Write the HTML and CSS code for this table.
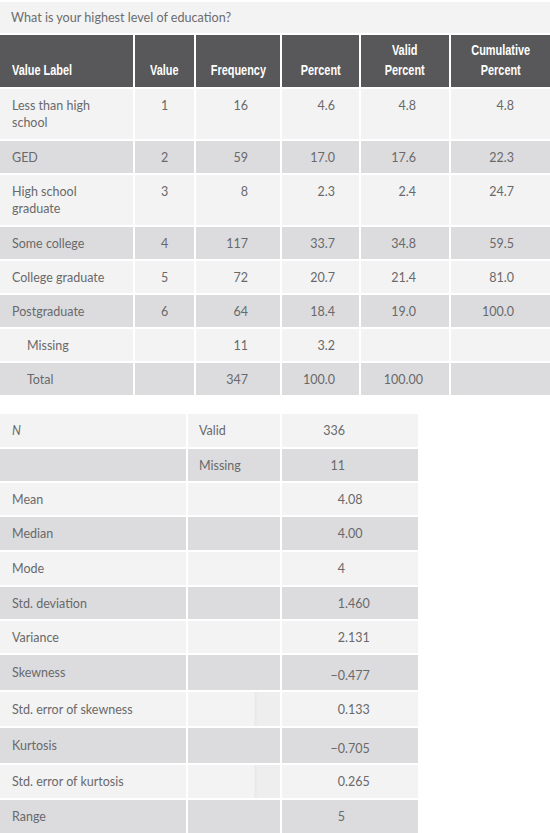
FILE: index.html
```html
<!DOCTYPE html>
<html lang="en">
<head>
<meta charset="utf-8">
<title>Education frequencies</title>
<link rel="stylesheet" href="styles.css">
</head>
<body>
<div class="freq">
  <div class="caption">What is your highest level of education?</div>
  <div class="grid">
    <div class="hd left"><span class="t">Value Label</span></div>
    <div class="hd"><span class="t">Value</span></div>
    <div class="hd"><span class="t">Frequency</span></div>
    <div class="hd"><span class="t">Percent</span></div>
    <div class="hd"><span class="t">Valid<br>Percent</span></div>
    <div class="hd"><span class="t">Cumulative<br>Percent</span></div>

    <div class="c lbl tall">Less than high<br>school</div>
    <div class="c val tall">1</div>
    <div class="c fq tall">16</div>
    <div class="c pc tall">4.6</div>
    <div class="c vp tall">4.8</div>
    <div class="c cp tall">4.8</div>

    <div class="c lbl dark">GED</div>
    <div class="c val dark">2</div>
    <div class="c fq dark">59</div>
    <div class="c pc dark">17.0</div>
    <div class="c vp dark">17.6</div>
    <div class="c cp dark">22.3</div>

    <div class="c lbl tall">High school<br>graduate</div>
    <div class="c val tall">3</div>
    <div class="c fq tall">8</div>
    <div class="c pc tall">2.3</div>
    <div class="c vp tall">2.4</div>
    <div class="c cp tall">24.7</div>

    <div class="c lbl dark">Some college</div>
    <div class="c val dark">4</div>
    <div class="c fq dark">117</div>
    <div class="c pc dark">33.7</div>
    <div class="c vp dark">34.8</div>
    <div class="c cp dark">59.5</div>

    <div class="c lbl">College graduate</div>
    <div class="c val">5</div>
    <div class="c fq">72</div>
    <div class="c pc">20.7</div>
    <div class="c vp">21.4</div>
    <div class="c cp">81.0</div>

    <div class="c lbl dark">Postgraduate</div>
    <div class="c val dark">6</div>
    <div class="c fq dark">64</div>
    <div class="c pc dark">18.4</div>
    <div class="c vp dark">19.0</div>
    <div class="c cp dark">100.0</div>

    <div class="c lbl indent">Missing</div>
    <div class="c val"></div>
    <div class="c fq">11</div>
    <div class="c pc">3.2</div>
    <div class="c vp"></div>
    <div class="c cp"></div>

    <div class="c lbl indent dark">Total</div>
    <div class="c val dark"></div>
    <div class="c fq dark">347</div>
    <div class="c pc dark">100.0</div>
    <div class="c vp vp2 dark">100.00</div>
    <div class="c cp dark"></div>
  </div>
</div>

<div class="stats">
  <div class="s name"><i>N</i></div>
  <div class="s sub">Valid</div>
  <div class="s num"><span class="int">336</span><span class="frac"></span></div>

  <div class="s name dark"></div>
  <div class="s sub dark">Missing</div>
  <div class="s num dark"><span class="int">11</span><span class="frac"></span></div>

  <div class="s name">Mean</div>
  <div class="s sub"></div>
  <div class="s num"><span class="int">4</span><span class="frac">.08</span></div>

  <div class="s name dark">Median</div>
  <div class="s sub dark"></div>
  <div class="s num dark"><span class="int">4</span><span class="frac">.00</span></div>

  <div class="s name">Mode</div>
  <div class="s sub"></div>
  <div class="s num"><span class="int">4</span><span class="frac"></span></div>

  <div class="s name dark">Std. deviation</div>
  <div class="s sub dark"></div>
  <div class="s num dark"><span class="int">1</span><span class="frac">.460</span></div>

  <div class="s name">Variance</div>
  <div class="s sub"></div>
  <div class="s num"><span class="int">2</span><span class="frac">.131</span></div>

  <div class="s name dark">Skewness</div>
  <div class="s sub dark"></div>
  <div class="s num dark low"><span class="int">&minus;0</span><span class="frac">.477</span></div>

  <div class="s name">Std. error of skewness</div>
  <div class="s sub shade"></div>
  <div class="s num"><span class="int">0</span><span class="frac">.133</span></div>

  <div class="s name dark">Kurtosis</div>
  <div class="s sub shade dark"></div>
  <div class="s num dark low"><span class="int">&minus;0</span><span class="frac">.705</span></div>

  <div class="s name">Std. error of kurtosis</div>
  <div class="s sub shade"></div>
  <div class="s num"><span class="int">0</span><span class="frac">.265</span></div>

  <div class="s name dark">Range</div>
  <div class="s sub shade dark"></div>
  <div class="s num dark"><span class="int">5</span><span class="frac"></span></div>
</div>
</body>
</html>
```

FILE: styles.css
```css
html, body {
  margin: 0;
  padding: 0;
  background: #ffffff;
}

body {
  padding-top: 2px;
  font-family: "Lato", "Open Sans", sans-serif;
  font-weight: 400;
  font-size: 12.5px;
  color: #69696b;
}

.freq {
  width: 550px;
}

.caption {
  background: #f3f3f3;
  height: 31px;
  line-height: 31px;
  padding-left: 11px;
  margin-bottom: 2px;
  color: #6c6c6e;
  font-size: 12.6px;
}

.grid {
  display: grid;
  grid-template-columns: 133px 59px 84px 77px 88px 1fr;
  column-gap: 2px;
  row-gap: 2px;
}

.hd {
  background: #58585a;
  color: #ffffff;
  height: 52px;
  box-sizing: border-box;
  display: flex;
  align-items: flex-end;
  justify-content: center;
  text-align: center;
  padding-bottom: 7px;
  font-family: "Liberation Sans", "Arial", sans-serif;
  font-weight: 700;
  font-size: 14px;
  line-height: 20px;
}

.hd .t {
  display: inline-block;
  white-space: nowrap;
  transform: scaleX(0.78);
  transform-origin: center bottom;
}

.hd.left {
  justify-content: flex-start;
  text-align: left;
  padding-left: 12px;
}

.hd.left .t {
  transform-origin: left bottom;
}

.c {
  background: #f3f3f3;
  height: 32px;
  box-sizing: border-box;
  padding-top: 8px;
  line-height: 17px;
}

.c.dark {
  background: #dcdcde;
}

.c.tall {
  height: 50px;
}

.lbl {
  padding-left: 12px;
}

.lbl.indent {
  padding-left: 27px;
}

.val {
  text-align: center;
}

.fq {
  text-align: right;
  padding-right: 32px;
}

.pc {
  text-align: right;
  padding-right: 24px;
}

.vp {
  text-align: right;
  padding-right: 33px;
}

.vp.vp2 {
  padding-right: 26px;
}

.cp {
  text-align: right;
  padding-right: 36px;
}

.stats {
  margin-top: 19px;
  width: 418px;
  display: grid;
  grid-template-columns: 186px 92px 136px;
  grid-template-rows: 33px 32px 32px 33px 33px 32px 32px 35px 34px 35px 33px 33px;
  column-gap: 2px;
  row-gap: 2px;
}

.s {
  background: #f3f3f3;
  box-sizing: border-box;
  display: flex;
  align-items: center;
  white-space: nowrap;
}

.s.dark {
  background: #dcdcde;
}

.name {
  padding-left: 12px;
}

.sub {
  padding-left: 11px;
}

.shade {
  background-image: linear-gradient(to right, rgba(255, 255, 255, 0) 66px, rgba(0, 0, 0, 0.045) 67px, rgba(0, 0, 0, 0.02) 70px, rgba(0, 0, 0, 0.02) 92px);
}

.num.low {
  padding-top: 6px;
}

.num .int {
  width: 63px;
  text-align: right;
}

.num .frac {
  text-align: left;
}
```
